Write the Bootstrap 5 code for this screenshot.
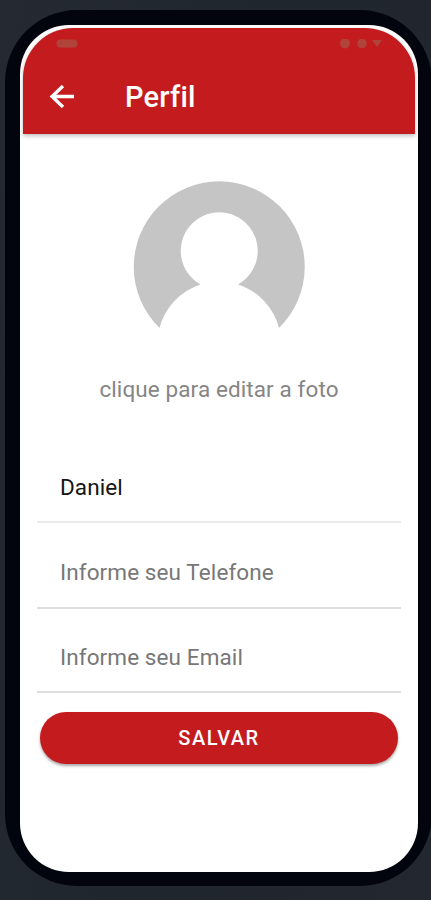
<!DOCTYPE html>
<html lang="pt-BR">
<head>
<meta charset="utf-8">
<meta name="viewport" content="width=device-width, initial-scale=1">
<title>Perfil</title>
<link href="https://cdn.jsdelivr.net/npm/bootstrap@5.3.0/dist/css/bootstrap.min.css" rel="stylesheet">
<style>
body{background:linear-gradient(100deg,#252a32,#20262d 50%,#23272f);font-family:Roboto,"Liberation Sans",sans-serif;height:900px;overflow:hidden}
.phone{width:427px;height:876px;margin:10px 0 0 5px;padding:15px 14px 14px 15px;background:#02050d;border-radius:72px}
.screen{width:398px;height:847px;padding:3px;background:#fff;border-radius:49px;overflow:hidden}
.appbar{height:106px;background:#c41c1e;border-radius:50px 50px 0 0;box-shadow:0 2px 4px rgba(0,0,0,.25)}
.status{height:32px;padding:11px 32px 0 33px;color:#b0443b}
.title-row{height:74px;padding-left:26px}
.app-title{font-size:29px;font-weight:500;line-height:32px;margin:0 0 0 50px;letter-spacing:.2px}
.avatar{width:172px;height:150px;margin-top:46px}
.hint{font-size:22.5px;line-height:30px;margin-top:44px;color:#858585;letter-spacing:.1px}
.fields{margin:48px 14px 0}
.field{height:86px;padding:13px 23px 0;font-size:22.5px;line-height:30px;color:#777;letter-spacing:.1px;border-bottom:2px solid #dedede}
.field.filled{height:71px;padding-top:0;color:#151515;border-color:#ebebeb}
.field.last-field{height:84px}
.save{height:52px;margin:19px 17px 0;background:#c41c1e;color:#fff;font-size:20px;font-weight:500;letter-spacing:1.5px;box-shadow:0 2px 3px rgba(0,0,0,.35)}
</style>
<script src="https://cdn.jsdelivr.net/npm/bootstrap@5.3.0/dist/js/bootstrap.bundle.min.js"></script>
</head>
<body>
<main class="phone">
  <div class="screen d-flex flex-column">
    <header class="appbar flex-shrink-0 text-white">
      <div class="status d-flex justify-content-between align-items-start">
        <svg width="22" height="9" viewBox="0 0 22 9" fill="currentColor"><rect x=".5" y=".5" width="21" height="8" rx="4"/></svg>
        <svg width="44" height="10" viewBox="0 0 44 10" fill="currentColor"><circle cx="6" cy="4.500" r="5"/><circle cx="23" cy="4.500" r="4.800"/><path d="M33 1h10l-5 7z"/></svg>
      </div>
      <div class="title-row d-flex align-items-center">
        <svg width="26" height="26" viewBox="0 0 26 26" fill="none" stroke="#fff" stroke-width="3.300"><path d="M25 12.500H3M14 2 3 12.500l11 10.500"/></svg>
        <h1 class="app-title">Perfil</h1>
      </div>
    </header>
    <svg class="avatar align-self-center flex-shrink-0" viewBox="133 180 172 150"><path fill="#c5c5c5" d="M159.500 328A85.500 85.500 0 1 1 279 328A62 62 0 0 0 238 284.500A38.500 38.500 0 1 0 200.500 284.500A62 62 0 0 0 159.500 328Z"/></svg>
    <p class="hint text-center mb-0">clique para editar a foto</p>
    <section class="fields">
      <div class="field filled d-flex align-items-center">Daniel</div>
      <div class="field d-flex align-items-center">Informe seu Telefone</div>
      <div class="field last-field d-flex align-items-center">Informe seu Email</div>
    </section>
    <button type="button" class="save btn rounded-pill border-0 p-0 flex-shrink-0">SALVAR</button>
  </div>
</main>
</body>
</html>
